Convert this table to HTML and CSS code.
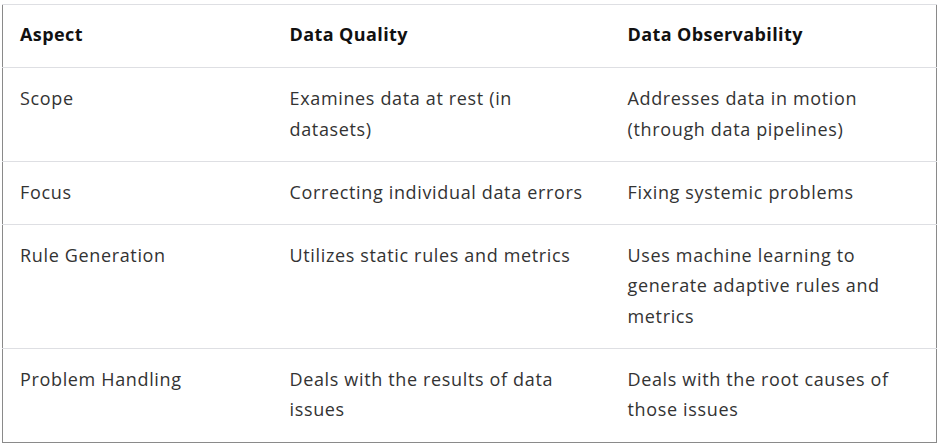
FILE: index.html
```html
<!DOCTYPE html>
<html lang="en">
<head>
<meta charset="utf-8">
<title>Data Quality vs Data Observability</title>
<link rel="stylesheet" href="styles.css">
</head>
<body>
<div class="wrap">
  <table class="cmp">
    <colgroup>
      <col class="c1">
      <col class="c2">
      <col class="c3">
    </colgroup>
    <thead>
      <tr><th>Aspect</th><th>Data Quality</th><th>Data Observability</th></tr>
    </thead>
    <tbody>
      <tr><td>Scope</td><td>Examines data at rest (in datasets)</td><td>Addresses data in motion (through data pipelines)</td></tr>
      <tr><td>Focus</td><td>Correcting individual data errors</td><td>Fixing systemic problems</td></tr>
      <tr><td>Rule Generation</td><td>Utilizes static rules and metrics</td><td>Uses machine learning to generate adaptive rules and metrics</td></tr>
      <tr><td>Problem Handling</td><td>Deals with the results of data issues</td><td>Deals with the root causes of those issues</td></tr>
    </tbody>
  </table>
</div>
</body>
</html>
```

FILE: styles.css
```css
html, body {
  margin: 0;
  padding: 0;
  background: #fff;
}
.wrap {
  padding: 4px 5px 0 2px;
}
.cmp {
  width: 935px;
  border-collapse: collapse;
  table-layout: fixed;
  border-left: 1px solid #8a8a8a;
  border-right: 1px solid #8a8a8a;
  border-bottom: 1px solid #8a8a8a;
  font-family: "Open Sans", "Noto Sans", sans-serif;
  font-size: 18px;
  line-height: 30.3px;
  letter-spacing: 0.65px;
  color: #333;
}
.c1 { width: 270px; }
.c2 { width: 338px; }
.cmp th,
.cmp td {
  text-align: left;
  vertical-align: top;
  padding: 15px 18px 17px 17px;
  border-top: 1px solid #dedfe3;
}
.cmp th {
  padding-top: 14px;
  padding-bottom: 18px;
  font-weight: 700;
  color: #111;
  letter-spacing: 0.4px;
}
```
